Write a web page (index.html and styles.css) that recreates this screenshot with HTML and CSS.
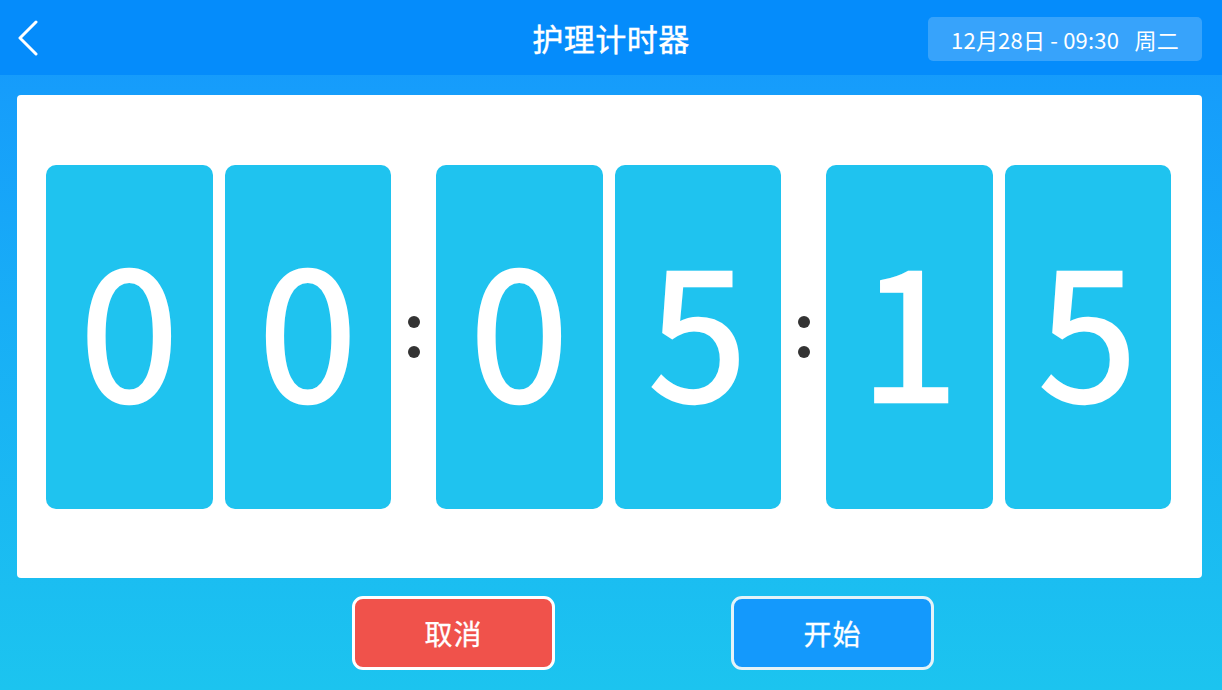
FILE: index.html
```html
<!DOCTYPE html>
<html lang="zh-CN">
<head>
<meta charset="utf-8">
<title>护理计时器</title>
<link rel="stylesheet" href="styles.css">
</head>
<body>
<div class="app">
  <header class="topbar">
    <button class="back" aria-label="返回">
      <svg width="24" height="36" viewBox="0 0 24 36"><path d="M20 2 L4 18 L20 34" fill="none" stroke="#fff" stroke-width="3" stroke-linecap="round" stroke-linejoin="round"/></svg>
    </button>
    <h1 class="title">护理计时器</h1>
    <div class="datetime">12月28日 - 09:30&nbsp;&nbsp;&nbsp;周二</div>
  </header>
  <main class="content">
    <section class="panel">
      <div class="clock">
        <div class="card">0</div>
        <div class="card">0</div>
        <div class="colon"><span></span><span></span></div>
        <div class="card">0</div>
        <div class="card">5</div>
        <div class="colon"><span></span><span></span></div>
        <div class="card">1</div>
        <div class="card">5</div>
      </div>
    </section>
    <div class="actions">
      <button class="btn btn-cancel">取消</button>
      <button class="btn btn-start">开始</button>
    </div>
  </main>
</div>
</body>
</html>
```
FILE: styles.css
```css
* { box-sizing: border-box; }
html, body { margin: 0; padding: 0; }
body {
  width: 1222px;
  height: 690px;
  overflow: hidden;
  font-family: "Noto Sans CJK SC", "Noto Sans", sans-serif;
  color: #fff;
}
.app {
  width: 1222px;
  height: 690px;
  display: flex;
  flex-direction: column;
  background: linear-gradient(180deg, #1596fd 0%, #18aef6 45%, #1cc4ef 100%);
}
.topbar {
  height: 75px;
  flex: none;
  background: #058cfb;
  display: flex;
  align-items: center;
  position: relative;
  padding: 0 20px 0 16px;
}
.back {
  background: none;
  border: 0;
  padding: 0;
  width: 26px;
  height: 36px;
  display: flex;
  align-items: center;
  cursor: pointer;
}
.title {
  position: absolute;
  left: 0;
  right: 0;
  top: 0;
  text-align: center;
  margin: 0;
  font-size: 31px;
  font-weight: 400;
  -webkit-text-stroke: 0.4px #fff;
  line-height: 76px;
  letter-spacing: 0.5px;
  pointer-events: none;
}
.datetime {
  margin-left: auto;
  width: 274px;
  height: 44px;
  margin-top: 2px;
  border-radius: 5px;
  background: rgba(255, 255, 255, 0.2);
  font-size: 22px;
  line-height: 44px;
  text-align: center;
  letter-spacing: 0.2px;
}
.content {
  flex: 1;
  display: flex;
  flex-direction: column;
  padding: 20px 20px 20px 17px;
}
.panel {
  height: 483px;
  background: #fff;
  border-radius: 4px;
  display: flex;
  align-items: center;
  padding: 0 31px 0 29px;
}
.clock {
  display: flex;
  width: 100%;
  height: 344px;
  gap: 12px;
}
.card {
  flex: 1;
  border-radius: 10px;
  background: #1fc3ef;
  color: #fff;
  font-size: 178px;
  line-height: 320px;
  text-align: center;
  font-weight: 400;
  -webkit-text-stroke: 2.5px #fff;
}
.colon {
  width: 21px;
  flex: none;
  display: flex;
  flex-direction: column;
  align-items: center;
  justify-content: center;
  gap: 18px;
}
.colon span {
  width: 12px;
  height: 12px;
  border-radius: 50%;
  background: #333;
}
.actions {
  margin-top: 18px;
  display: flex;
  justify-content: center;
  gap: 176px;
  padding-left: 67px;
}
.btn {
  width: 203px;
  height: 74px;
  border-radius: 11px;
  border: 3px solid #fff;
  font-family: "Noto Sans CJK SC", sans-serif;
  font-size: 28px;
  font-weight: 400;
  -webkit-text-stroke: 0.3px #fff;
  color: #fff;
  cursor: pointer;
  letter-spacing: 1px;
}
.btn-cancel { background: #f0524b; }
.btn-start { background: #1499fc; border-color: #e4f3f8; }
```
